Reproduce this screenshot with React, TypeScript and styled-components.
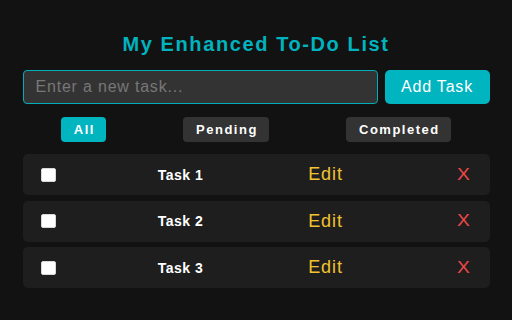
import React, { useState } from 'react';
import styled, { createGlobalStyle } from 'styled-components';

type Filter = 'all' | 'pending' | 'completed';

type Task = {
  id: number;
  text: string;
  done: boolean;
};

const GlobalStyle = createGlobalStyle`
  html, body {
    margin: 0;
    padding: 0;
    background: #121212;
  }
  body {
    font-family: "Liberation Sans", Arial, sans-serif;
    color: #fff;
  }
`;

export default function App() {
  const [tasks, setTasks] = useState<Task[]>([
    { id: 1, text: 'Task 1', done: false },
    { id: 2, text: 'Task 2', done: false },
    { id: 3, text: 'Task 3', done: false },
  ]);
  const [filter, setFilter] = useState<Filter>('all');
  const [draft, setDraft] = useState('');

  const addTask = () => {
    if (!draft.trim()) return;
    setTasks((prev) => [...prev, { id: Date.now(), text: draft.trim(), done: false }]);
    setDraft('');
  };

  const toggle = (id: number) => {
    setTasks((prev) => prev.map((t) => (t.id === id ? { ...t, done: !t.done } : t)));
  };

  const remove = (id: number) => {
    setTasks((prev) => prev.filter((t) => t.id !== id));
  };

  const visible = tasks.filter((t) => (filter === 'all' ? true : filter === 'pending' ? !t.done : t.done));

  return (
    <>
      <GlobalStyle />
      <StyledPage>
        <StyledTitle>My Enhanced To-Do List</StyledTitle>
        <StyledForm
          onSubmit={(e) => {
            e.preventDefault();
            addTask();
          }}
        >
          <StyledInput placeholder="Enter a new task..." value={draft} onChange={(e) => setDraft(e.target.value)} />
          <StyledAddButton type="submit">Add Task</StyledAddButton>
        </StyledForm>
        <StyledFilters>
          <StyledFilterButton active={filter === 'all'} onClick={() => setFilter('all')}>
            All
          </StyledFilterButton>
          <StyledFilterButton active={filter === 'pending'} onClick={() => setFilter('pending')}>
            Pending
          </StyledFilterButton>
          <StyledFilterButton active={filter === 'completed'} onClick={() => setFilter('completed')}>
            Completed
          </StyledFilterButton>
        </StyledFilters>
        <StyledList>
          {visible.map((task) => (
            <StyledRow key={task.id}>
              <StyledCheck checked={task.done} onClick={() => toggle(task.id)} />
              <StyledTaskName done={task.done}>{task.text}</StyledTaskName>
              <StyledEdit>Edit</StyledEdit>
              <StyledDelete onClick={() => remove(task.id)}>X</StyledDelete>
            </StyledRow>
          ))}
        </StyledList>
      </StyledPage>
    </>
  );
}

const StyledPage = styled.div`
  width: 467px;
  margin: 0 auto;
  padding-top: 33px;
  display: flex;
  flex-direction: column;
`;

const StyledTitle = styled.h1`
  margin: 0 0 14px;
  text-align: center;
  font-size: 20px;
  line-height: 23px;
  letter-spacing: 1.6px;
  font-weight: bold;
  color: #00b3bf;
`;

const StyledForm = styled.form`
  display: flex;
  gap: 7px;
  height: 34px;
  margin: 0;
`;

const StyledInput = styled.input`
  flex: 1;
  min-width: 0;
  box-sizing: border-box;
  height: 34px;
  padding: 0 12px;
  border: 1px solid #00adb8;
  border-radius: 4px;
  background: #333;
  color: #eee;
  font-family: "Liberation Sans", Arial, sans-serif;
  font-size: 16px;
  letter-spacing: 0.8px;
  outline: none;
  &::placeholder {
    color: #777;
  }
`;

const StyledAddButton = styled.button`
  width: 105px;
  height: 34px;
  border: none;
  border-radius: 5px;
  background: #00b4c0;
  color: #fff;
  font-family: "Liberation Sans", Arial, sans-serif;
  font-size: 16px;
  letter-spacing: 0.8px;
  cursor: pointer;
`;

const StyledFilters = styled.div`
  display: flex;
  justify-content: space-around;
  margin-top: 13px;
`;

const StyledFilterButton = styled.button<{ active: boolean }>`
  height: 25px;
  padding: 0 11.5px 0 13px;
  border: none;
  border-radius: 4px;
  background: ${({ active }) => (active ? '#00b4c0' : '#333')};
  color: #fff;
  font-family: "Liberation Sans", Arial, sans-serif;
  font-size: 13px;
  font-weight: bold;
  letter-spacing: 1.5px;
  cursor: pointer;
`;

const StyledList = styled.div`
  display: flex;
  flex-direction: column;
  gap: 5.5px;
  margin-top: 12px;
`;

const StyledRow = styled.div`
  display: grid;
  grid-template-columns: 16px 248px 42px 1fr;
  align-items: center;
  height: 41px;
  padding: 0 22px 0 18px;
  border-radius: 5px;
  background: #1e1e1e;
`;

const StyledCheck = styled.span<{ checked: boolean }>`
  width: 15px;
  height: 14px;
  box-sizing: border-box;
  border: 1px solid #d8d8d8;
  border-radius: 2px;
  background: ${({ checked }) => (checked ? '#00b4c0' : '#fff')};
  cursor: pointer;
`;

const StyledTaskName = styled.span<{ done: boolean }>`
  text-align: center;
  font-size: 14px;
  font-weight: bold;
  letter-spacing: 0.5px;
  color: #fff;
  text-decoration: ${({ done }) => (done ? 'line-through' : 'none')};
`;

const StyledEdit = styled.span`
  text-align: center;
  font-size: 18px;
  letter-spacing: 0.9px;
  color: #f2c230;
  cursor: pointer;
`;

const StyledDelete = styled.span`
  justify-self: end;
  margin-right: -1px;
  font-size: 16px;
  color: #ec4848;
  transform: scaleX(1.2);
  cursor: pointer;
`;
